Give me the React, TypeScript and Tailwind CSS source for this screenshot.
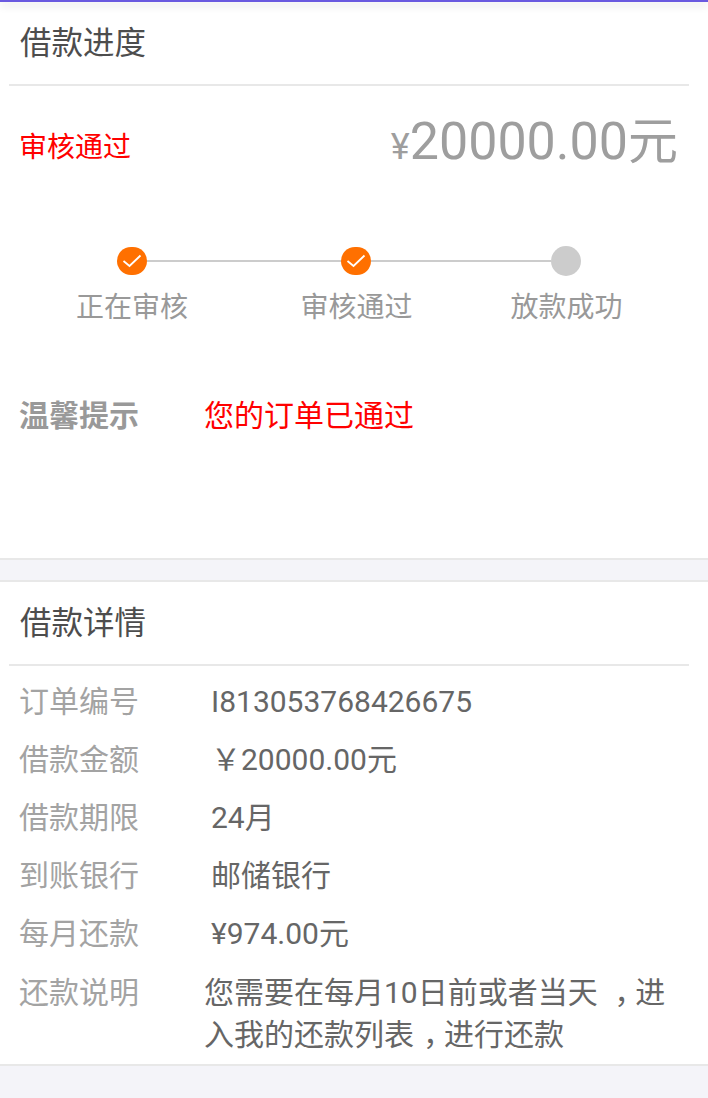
import React from 'react';

const details = [
  { label: '订单编号', value: 'I813053768426675' },
  { label: '借款金额', value: '￥20000.00元' },
  { label: '借款期限', value: '24月' },
  { label: '到账银行', value: '邮储银行' },
  { label: '每月还款', value: '¥974.00元' },
];

function Done() {
  return (
    <div className="w-[30px] h-[28px] rounded-full bg-[#ff7000] flex items-center justify-center shrink-0">
      <svg width="20" height="14" viewBox="0 0 20 14" fill="none" stroke="#fff" strokeWidth="1.8">
        <path d="M1.5 7l6 5L18.5 1.5" />
      </svg>
    </div>
  );
}

function SectionTitle({ children }: { children: React.ReactNode }) {
  return (
    <div className="ml-[9px] mr-[19px] h-[84px] border-b-2 border-[#e8e8e8] pl-[11px] pt-[2px] flex items-center text-[31.5px] text-[#4d4d4d]">
      {children}
    </div>
  );
}

// 逗号居中显示
function Comma() {
  return <span className="pl-[9px] tracking-[-9px]">，</span>;
}

export default function App() {
  return (
    <div
      className="w-[708px] h-[1098px] bg-[#f4f4f9] overflow-hidden"
      style={{ fontFamily: 'Roboto, "Noto Sans CJK SC", sans-serif' }}
    >
      <div className="h-[2px] bg-[#6a5ae0] shadow-[0_3px_8px_rgba(0,0,0,0.2)] relative" />

      {/* 进度 */}
      <section className="bg-white h-[556px]">
        <SectionTitle>借款进度</SectionTitle>
        <div className="flex justify-between pl-[19px] pr-[30px] pt-[26px] h-[92px]">
          <span className="text-[28px] leading-[40px] text-[#ff0000] mt-[16px]">审核通过</span>
          <span className="text-[50px] text-[#9e9e9e] leading-[60px] flex items-baseline">
            <span className="text-[36px]">¥</span>
            <span className="text-[52px]">20000.00</span>元
          </span>
        </div>

        <div className="flex items-center pl-[117px] pr-[127px] mt-[68px] h-[30px]">
          <Done />
          <div className="w-[194px] h-[2px] bg-[#cccccc]" />
          <Done />
          <div className="flex-1 h-[2px] bg-[#cccccc]" />
          <div className="w-[30px] h-[30px] rounded-full bg-[#cccccc] shrink-0" />
        </div>
        <div className="flex mt-[14px] text-[28px] leading-[36px] text-[#999999]">
          <span className="w-[264px] text-center">正在审核</span>
          <span className="w-[185px] text-center">审核通过</span>
          <span className="w-[235px] text-center">放款成功</span>
        </div>

        <div className="flex items-center mt-[70px] pl-[19px] leading-[40px]">
          <span className="w-[185px] text-[30px] font-bold text-[#999999]">温馨提示</span>
          <span className="text-[30px] text-[#ff0000]">您的订单已通过</span>
        </div>
      </section>

      {/* 详情 */}
      <div className="h-[2px] bg-[#e8e8e8]" />
      <div className="h-[20px]" />
      <section className="bg-white border-y-2 border-[#e8e8e8] h-[486px]">
        <SectionTitle>借款详情</SectionTitle>
        <div className="pl-[19px] pr-[40px] text-[30px]">
          {details.map((row) => (
            <div key={row.label} className="flex items-center h-[58px] translate-y-[6px]">
              <span className="w-[192px] text-[#a3a3a3] shrink-0">{row.label}</span>
              <span className="text-[#666666]">{row.value}</span>
            </div>
          ))}
          <div className="flex h-[84px] translate-y-[8px]">
            <span className="w-[185px] text-[#a3a3a3] leading-[58px] shrink-0">还款说明</span>
            <div className="text-[#666666] leading-[42px] pt-[8px] whitespace-nowrap">
              <div>
                您需要在每月10日前或者当天 <Comma />进
              </div>
              <div>
                入我的还款列表<Comma />进行还款
              </div>
            </div>
          </div>
        </div>
      </section>
    </div>
  );
}
